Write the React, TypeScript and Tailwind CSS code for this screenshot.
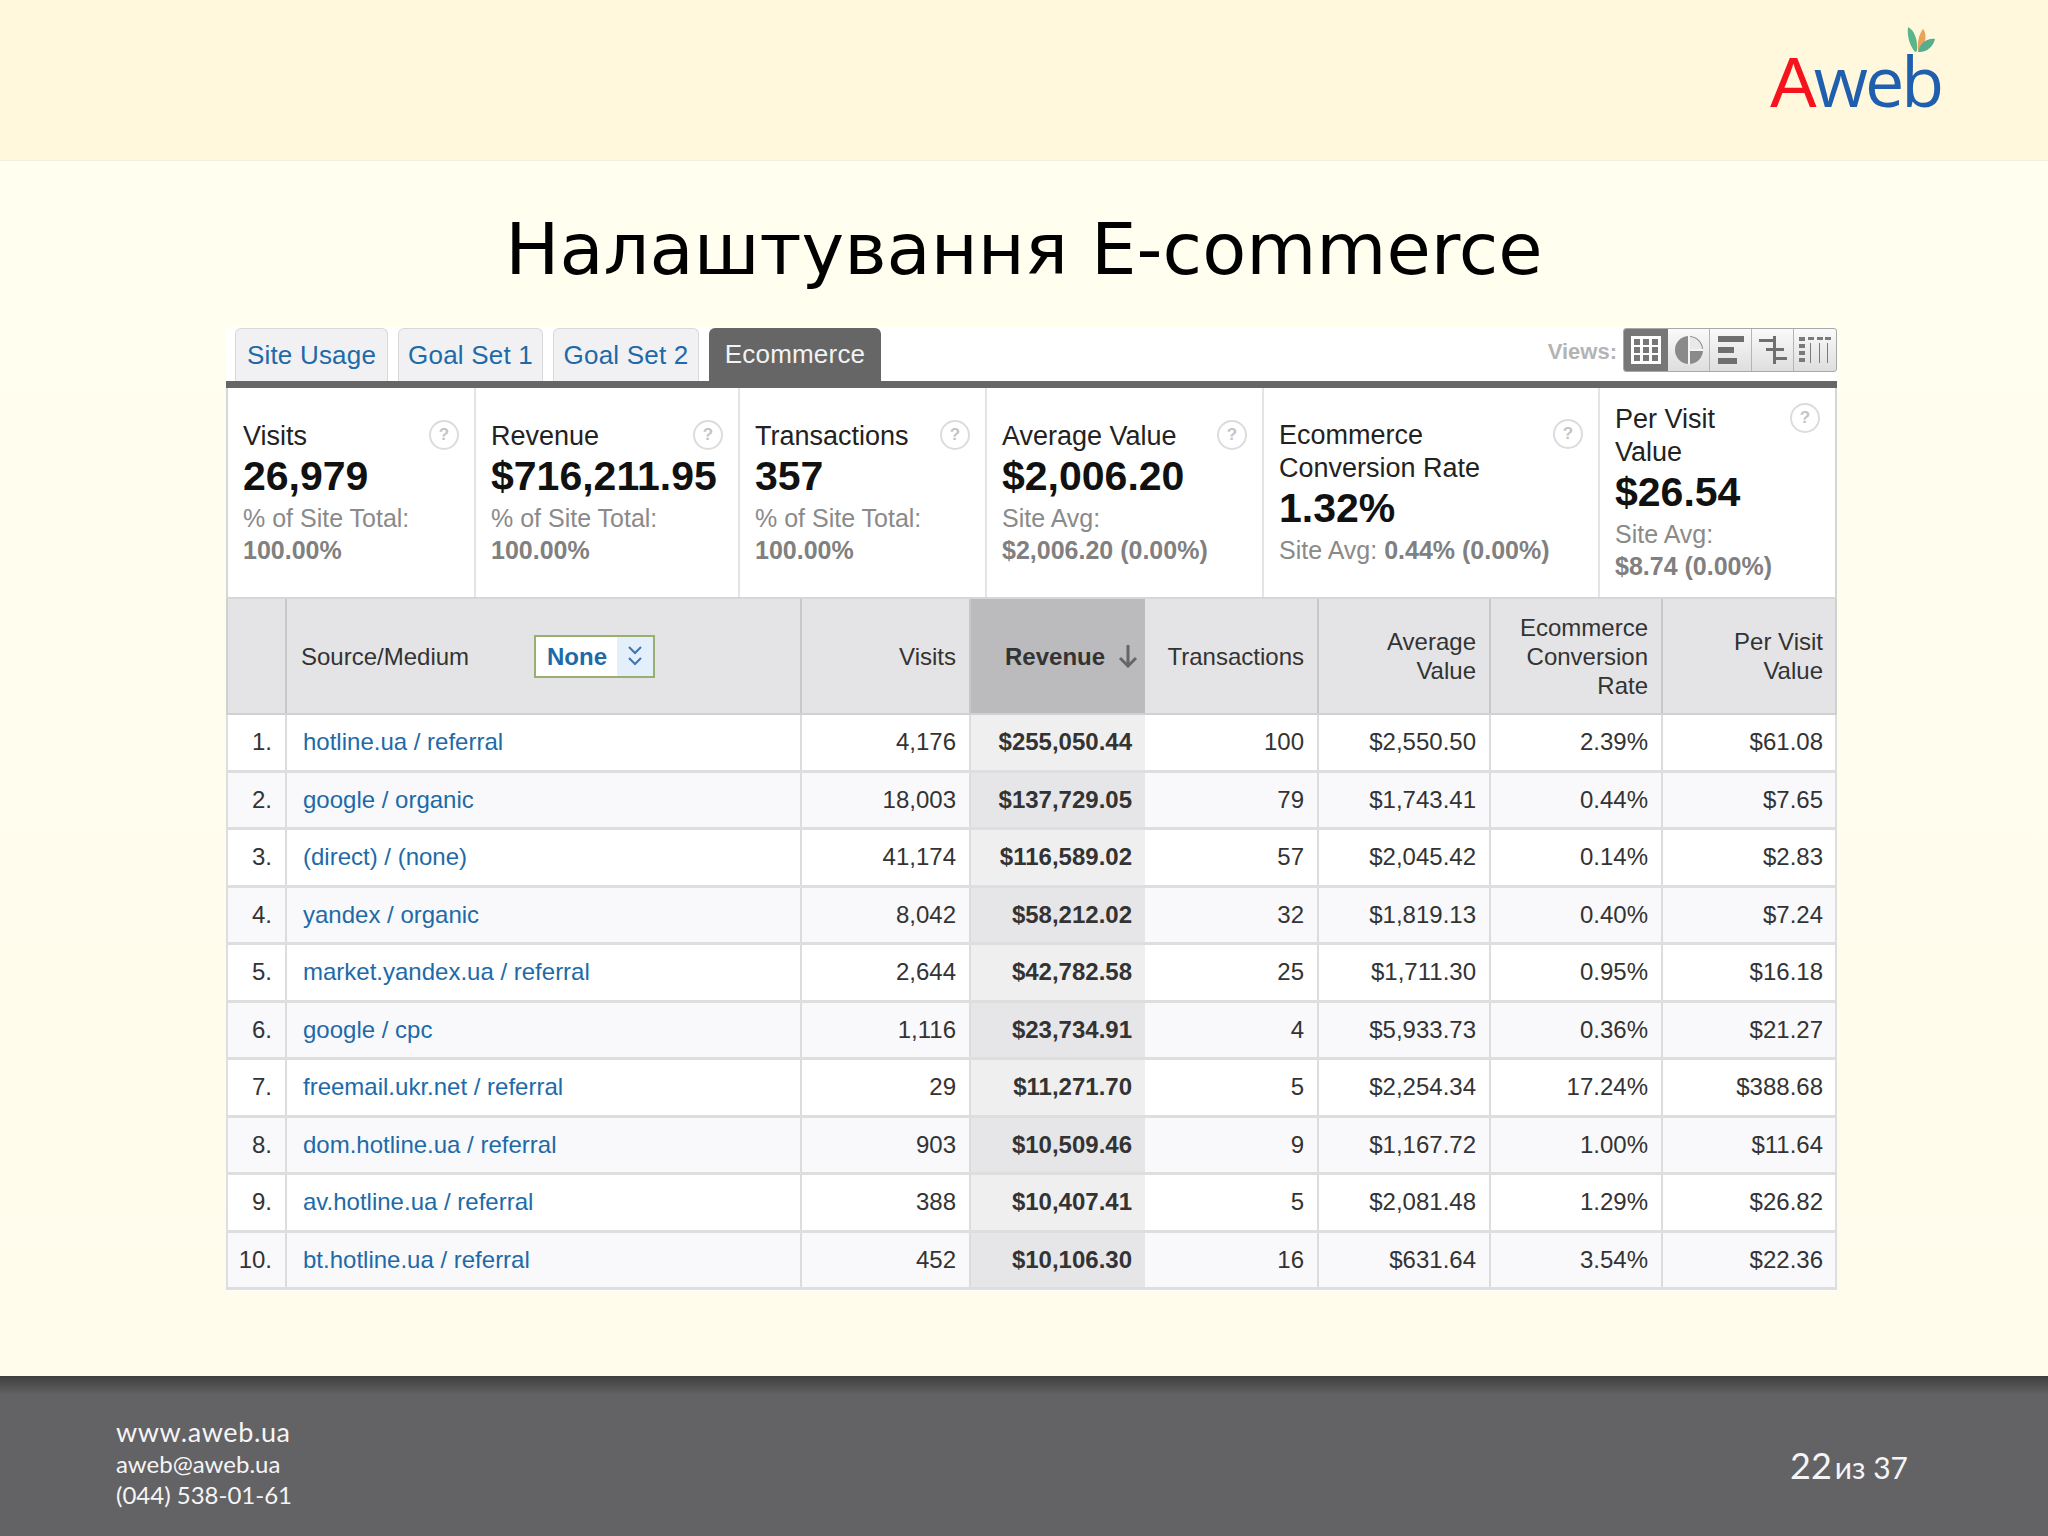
const rows = [
  ['1.', 'hotline.ua / referral', '4,176', '$255,050.44', '100', '$2,550.50', '2.39%', '$61.08'],
  ['2.', 'google / organic', '18,003', '$137,729.05', '79', '$1,743.41', '0.44%', '$7.65'],
  ['3.', '(direct) / (none)', '41,174', '$116,589.02', '57', '$2,045.42', '0.14%', '$2.83'],
  ['4.', 'yandex / organic', '8,042', '$58,212.02', '32', '$1,819.13', '0.40%', '$7.24'],
  ['5.', 'market.yandex.ua / referral', '2,644', '$42,782.58', '25', '$1,711.30', '0.95%', '$16.18'],
  ['6.', 'google / cpc', '1,116', '$23,734.91', '4', '$5,933.73', '0.36%', '$21.27'],
  ['7.', 'freemail.ukr.net / referral', '29', '$11,271.70', '5', '$2,254.34', '17.24%', '$388.68'],
  ['8.', 'dom.hotline.ua / referral', '903', '$10,509.46', '9', '$1,167.72', '1.00%', '$11.64'],
  ['9.', 'av.hotline.ua / referral', '388', '$10,407.41', '5', '$2,081.48', '1.29%', '$26.82'],
  ['10.', 'bt.hotline.ua / referral', '452', '$10,106.30', '16', '$631.64', '3.54%', '$22.36'],
];

const cards = [
  { w: 'w-[248px]', label: ['Visits'], value: '26,979', sub: '% of Site Total:', strong: '100.00%' },
  { w: 'w-[264px]', label: ['Revenue'], value: '$716,211.95', sub: '% of Site Total:', strong: '100.00%' },
  { w: 'w-[247px]', label: ['Transactions'], value: '357', sub: '% of Site Total:', strong: '100.00%' },
  { w: 'w-[277px]', label: ['Average Value'], value: '$2,006.20', sub: 'Site Avg:', strong: '$2,006.20 (0.00%)' },
  { w: 'w-[336px]', label: ['Ecommerce', 'Conversion Rate'], value: '1.32%', sub: 'Site Avg:', strong: '0.44% (0.00%)', inline: true },
  { w: 'flex-1', label: ['Per Visit', 'Value'], value: '$26.54', sub: 'Site Avg:', strong: '$8.74 (0.00%)' },
];

const cols = 'grid grid-cols-[59px_515px_169px_174px_174px_172px_172px_173px]';

function Help() {
  return (
    <span className="flex h-[30px] w-[30px] shrink-0 items-center justify-center rounded-full border-2 border-[#dcdcdc] text-[17px] font-bold text-[#c4c4c4]">
      ?
    </span>
  );
}

function Tab({ label, active }: { label: string; active?: boolean }) {
  if (active) {
    return (
      <div className="flex h-[53px] w-[172px] items-center justify-center rounded-t-md bg-[#666666] text-[26px] tracking-[0.2px] text-[#f2f2f2]">
        {label}
      </div>
    );
  }
  return (
    <div className="flex h-[53px] items-center justify-center rounded-t-md border border-b-0 border-[#d8d8d8] bg-[#f1f1f3] text-[26px] tracking-[0.2px] text-[#1e6aa8]">
      {label}
    </div>
  );
}

function Views() {
  return (
    <div className="flex h-[44px] w-[214px] overflow-hidden rounded-[3px] border border-[#a8a8a8] bg-gradient-to-b from-[#fafafa] to-[#dedede]">
      <div className="flex w-[44px] items-center justify-center bg-[#777777]">
        <svg width="30" height="28" viewBox="0 0 30 28">
          <rect width="30" height="28" fill="#fff" />
          <g fill="#777">
            <rect x="3" y="3" width="6" height="6" /><rect x="12" y="3" width="6" height="6" /><rect x="21" y="3" width="6" height="6" />
            <rect x="3" y="11" width="6" height="6" /><rect x="12" y="11" width="6" height="6" /><rect x="21" y="11" width="6" height="6" />
            <rect x="3" y="19" width="6" height="6" /><rect x="12" y="19" width="6" height="6" /><rect x="21" y="19" width="6" height="6" />
          </g>
        </svg>
      </div>
      <div className="flex w-[42px] items-center justify-center border-r border-[#b5b5b5]">
        <svg width="30" height="30" viewBox="0 0 30 30">
          <circle cx="15" cy="15" r="14" fill="#8a8a8a" />
          <path d="M15 1v28M15 15h14" stroke="#f4f4f4" strokeWidth="2" fill="none" />
          <path d="M16 2a13 13 0 0 1 12 12H16z" fill="#e9e9e9" />
        </svg>
      </div>
      <div className="flex w-[42px] items-center justify-center border-r border-[#b5b5b5]">
        <svg width="28" height="28" viewBox="0 0 28 28" fill="#6f6f6f">
          <rect x="1" y="0" width="26" height="6" /><rect x="1" y="11" width="16" height="6" /><rect x="1" y="22" width="19" height="6" />
        </svg>
      </div>
      <div className="flex w-[42px] items-center justify-center border-r border-[#b5b5b5]">
        <svg width="28" height="28" viewBox="0 0 28 28" fill="#6f6f6f">
          <rect x="14" y="0" width="3" height="28" /><rect x="0" y="3" width="17" height="3" /><rect x="7" y="12" width="18" height="3" /><rect x="14" y="21" width="14" height="3" />
        </svg>
      </div>
      <div className="flex flex-1 items-center justify-center">
        <svg width="32" height="26" viewBox="0 0 32 26" fill="#7a7a7a">
          <rect x="0" y="0" width="6" height="4" /><rect x="0" y="7" width="6" height="4" /><rect x="0" y="14" width="6" height="4" /><rect x="0" y="21" width="6" height="4" />
          <rect x="9" y="0" width="6" height="3" /><rect x="18" y="0" width="6" height="3" /><rect x="26" y="0" width="6" height="3" />
          <rect x="11" y="6" width="1" height="20" /><rect x="20" y="6" width="1" height="20" /><rect x="28" y="6" width="1" height="20" />
        </svg>
      </div>
    </div>
  );
}

function Logo() {
  return (
    <div className="relative h-[70px] w-[170px] font-['Open_Sans',sans-serif] text-[70px] leading-[70px] tracking-[-3px]">
      <span className="font-['Liberation_Sans',sans-serif] text-[#f5141e]">A</span>
      <span className="text-[#1f5fae]">web</span>
      <svg className="absolute left-[136px] top-[-19px]" width="30" height="28" viewBox="0 0 30 28">
        <path d="M9 26C3 19 1 9 2 1c6 3 10 12 9 24z" fill="#5bb58c" />
        <path d="M12 24C11 17 13 8 17 3c4 4 3 14-2 21z" fill="#e9a35a" />
        <path d="M12 26c2-9 9-14 17-13-2 8-9 14-17 13z" fill="#58ad8f" />
      </svg>
    </div>
  );
}

export default function App() {
  return (
    <div className="flex h-[1536px] w-[2048px] flex-col overflow-hidden bg-gradient-to-b from-[#fffff0] to-[#fffbeb] font-['Liberation_Sans',sans-serif]">
      <header className="flex h-[161px] shrink-0 justify-end border-b border-[#f3efe0] bg-[#fff8dc] pr-[108px] pt-[45px]">
        <Logo />
      </header>

      <h1 className="mt-[46px] h-[84px] text-center font-['DejaVu_Sans',sans-serif] text-[72px] leading-[84px] text-black">
        Налаштування E-commerce
      </h1>

      <main className="ml-[226px] mt-[36px] h-[964px] w-[1611px] bg-white">
        <div className="flex h-[54px] items-end gap-[10px] pl-[9px]">
          <div className="w-[153px]"><Tab label="Site Usage" /></div>
          <div className="w-[145px]"><Tab label="Goal Set 1" /></div>
          <div className="w-[146px]"><Tab label="Goal Set 2" /></div>
          <Tab label="Ecommerce" active />
          <div className="ml-auto flex h-[53px] items-start gap-[6px] pr-0">
            <span className="mt-[7px] text-[22px] font-bold text-[#b4b4b4]">Views:</span>
            <Views />
          </div>
        </div>
        <div className="h-[7px] bg-[#666666]" />

        <div className="flex h-[211px] border-x-2 border-b-2 border-[#d6d6d6]">
          {cards.map((c) => (
            <div key={c.value} className={`${c.w} flex flex-col justify-center border-r-2 border-[#e4e4e4] px-[15px] last:border-r-0`}>
              <div className="flex justify-between">
                <div className="text-[27px] leading-[33px] text-[#222222]">
                  {c.label.map((l) => <div key={l}>{l}</div>)}
                </div>
                <Help />
              </div>
              <div className="text-[41px] font-bold leading-[46px] text-[#111111]">{c.value}</div>
              {c.inline ? (
                <div className="mt-[3px] text-[25px] leading-[32px] text-[#8a8a8a]">
                  {c.sub} <span className="font-bold text-[#808080]">{c.strong}</span>
                </div>
              ) : (
                <div className="mt-[3px] text-[25px] leading-[32px] text-[#8a8a8a]">
                  <div>{c.sub}</div>
                  <div className="font-bold text-[#808080]">{c.strong}</div>
                </div>
              )}
            </div>
          ))}
        </div>

        <div className={`${cols} h-[116px] border-x-2 border-b-2 border-[#d0d0d0] bg-[#e4e4e6] text-[24px] leading-[29px] text-[#333333]`}>
          <div className="border-r-2 border-[#c8c8c8]" />
          <div className="flex items-center justify-between border-r-2 border-[#c8c8c8] pl-[14px] pr-[145px]">
            <span>Source/Medium</span>
            <div className="flex h-[43px] w-[121px] items-center justify-between border-2 border-[#9aae70] bg-white pl-[11px] font-bold text-[#1e6aa8]">
              None
              <span className="flex h-full w-[36px] items-center justify-center bg-[#e3effa]">
                <svg width="18" height="24" viewBox="0 0 18 24" fill="none" stroke="#3f74b0" strokeWidth="2">
                  <path d="M3 3l6 6 6-6M3 14l6 6 6-6" />
                </svg>
              </span>
            </div>
          </div>
          <div className="flex items-center justify-end border-r-2 border-[#c8c8c8] pr-[13px]">Visits</div>
          <div className="flex items-center justify-between bg-[#bbbbbd] pl-[34px] pr-[6px] font-bold">
            Revenue
            <svg width="22" height="24" viewBox="0 0 22 24" fill="none" stroke="#666" strokeWidth="3">
              <path d="M11 1v21M3 14l8 8 8-8" />
            </svg>
          </div>
          <div className="flex items-center justify-end border-r-2 border-[#c8c8c8] pr-[13px]">Transactions</div>
          <div className="flex items-center justify-end border-r-2 border-[#c8c8c8] pr-[13px] text-right">Average<br />Value</div>
          <div className="flex items-center justify-end border-r-2 border-[#c8c8c8] pr-[13px] text-right">Ecommerce<br />Conversion<br />Rate</div>
          <div className="flex items-center justify-end pr-[13px] text-right">Per Visit<br />Value</div>
        </div>

        {rows.map((r, i) => (
          <div key={r[0]} className={`${cols} h-[57.5px] border-x-2 border-b-[3px] border-[#dedede] text-[24px] text-[#333333] ${i % 2 ? 'bg-[#f9f9fb]' : 'bg-white'}`}>
            <div className="flex items-center justify-end border-r-2 border-[#dcdcdc] pr-[13px]">{r[0]}</div>
            <div className="flex items-center border-r-2 border-[#dcdcdc] pl-[16px] text-[#1e6aa8]">{r[1]}</div>
            <div className="flex items-center justify-end border-r-2 border-[#dcdcdc] pr-[13px]">{r[2]}</div>
            <div className={`flex items-center justify-end pr-[13px] font-bold ${i % 2 ? 'bg-[#e6e6e8]' : 'bg-[#efeff0]'}`}>{r[3]}</div>
            <div className="flex items-center justify-end border-r-2 border-[#dcdcdc] pr-[13px]">{r[4]}</div>
            <div className="flex items-center justify-end border-r-2 border-[#dcdcdc] pr-[13px]">{r[5]}</div>
            <div className="flex items-center justify-end border-r-2 border-[#dcdcdc] pr-[13px]">{r[6]}</div>
            <div className="flex items-center justify-end pr-[13px]">{r[7]}</div>
          </div>
        ))}
      </main>

      <footer className="mt-auto flex h-[160px] shrink-0 items-start justify-between bg-gradient-to-b from-[#3f3f3f] from-0% via-[#636265] via-[12%] to-[#636265] pl-[116px] pr-[140px] pt-[40px] font-['Lato',sans-serif] text-[#f5f5f5]">
        <div>
          <div className="text-[27px] leading-[32px] tracking-[0.6px]">www.aweb.ua</div>
          <div className="text-[24px] leading-[31px]">aweb@aweb.ua</div>
          <div className="text-[24px] leading-[31px]">(044) 538-01-61</div>
        </div>
        <div className="mt-[22px] flex items-baseline gap-[3px]">
          <span className="text-[36px]">22</span>
          <span className="text-[30px]">из 37</span>
        </div>
      </footer>
    </div>
  );
}
